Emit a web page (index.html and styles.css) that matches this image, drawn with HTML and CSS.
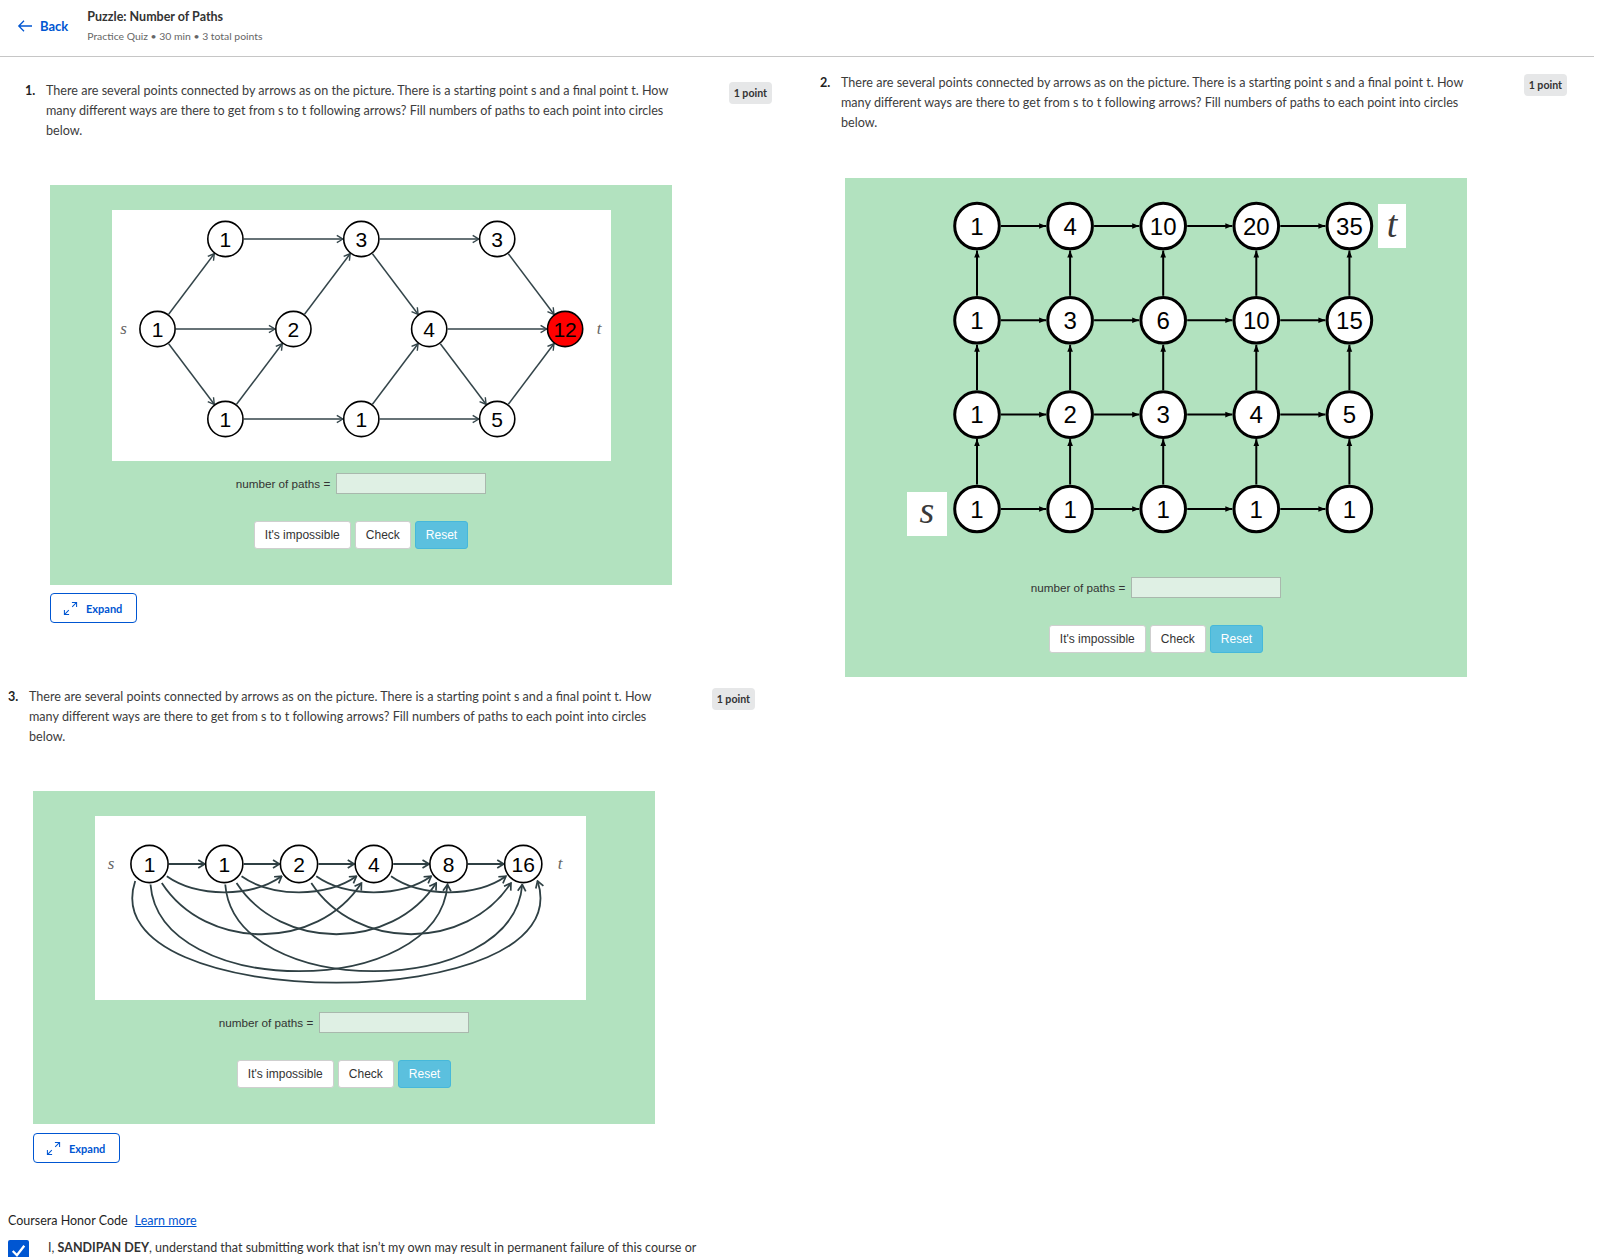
FILE: index.html
```html
<!DOCTYPE html>
<html lang="en">
<head>
<meta charset="utf-8">
<title>Puzzle: Number of Paths</title>
<link rel="stylesheet" href="styles.css">
</head>
<body>
<header class="topbar">
  <a class="back" href="#">
    <svg viewBox="0 0 16 16" aria-hidden="true"><path d="M15 8H1.8M7 2.8L1.8 8L7 13.2" fill="none" stroke="#0056d2" stroke-width="1.3"/></svg>
    <span>Back</span>
  </a>
  <div class="title-block">
    <div class="title">Puzzle: Number of Paths</div>
    <div class="meta">Practice Quiz • 30 min • 3 total points</div>
  </div>
</header>

<main class="quiz">
  <div class="row-top">
    <section class="q q1">
      <div class="q-head">
        <div class="qnum">1.</div>
        <div class="qtext">There are several points connected by arrows as on the picture. There is a starting point s and a final point t. How many different ways are there to get from s to t following arrows? Fill numbers of paths to each point into circles below.</div>
        <div class="badge">1 point</div>
      </div>
      <div class="widget">
        <div class="figure">
          <svg class="pic" width="499" height="251" viewBox="0 0 499 251">
            <defs>
              <marker id="oa1" viewBox="-8 -5 9 10" markerWidth="9" markerHeight="10" refX="0" refY="0" orient="auto" markerUnits="userSpaceOnUse">
                <path d="M-6,-3.6 Q-1.6,-1 0,0 Q-1.6,1 -6,3.6" fill="none" stroke="#34454a" stroke-width="1.4"/>
              </marker>
            </defs>
            <g class="e1">
              <path d="M56.65 104.23L102.25 43.77"/>
              <path d="M64 119H162.9"/>
              <path d="M56.65 133.77L102.25 194.23"/>
              <path d="M131.9 29H230.8"/>
              <path d="M124.55 194.23L170.25 133.77"/>
              <path d="M131.9 209H230.8"/>
              <path d="M192.55 104.23L238.15 43.77"/>
              <path d="M267.8 29H366.7"/>
              <path d="M260.45 43.77L306.05 104.23"/>
              <path d="M260.45 194.23L306.05 133.77"/>
              <path d="M267.8 209H366.7"/>
              <path d="M335.7 119H434.6"/>
              <path d="M328.35 133.77L374.05 194.23"/>
              <path d="M396.35 43.77L441.95 104.23"/>
              <path d="M396.35 194.23L441.95 133.77"/>
            </g>
            <g class="n1">
              <circle cx="45.5" cy="119" r="17.6"/>
              <circle cx="113.4" cy="29" r="17.6"/>
              <circle cx="113.4" cy="209" r="17.6"/>
              <circle cx="181.4" cy="119" r="17.6"/>
              <circle cx="249.3" cy="29" r="17.6"/>
              <circle cx="249.3" cy="209" r="17.6"/>
              <circle cx="317.2" cy="119" r="17.6"/>
              <circle cx="385.2" cy="29" r="17.6"/>
              <circle cx="385.2" cy="209" r="17.6"/>
              <circle class="hot" cx="453.1" cy="119" r="17.6"/>
            </g>
            <g class="v1">
              <text x="45.5" y="119" dy="7.5">1</text>
              <text x="113.4" y="29" dy="7.5">1</text>
              <text x="113.4" y="209" dy="7.5">1</text>
              <text x="181.4" y="119" dy="7.5">2</text>
              <text x="249.3" y="29" dy="7.5">3</text>
              <text x="249.3" y="209" dy="7.5">1</text>
              <text x="317.2" y="119" dy="7.5">4</text>
              <text x="385.2" y="29" dy="7.5">3</text>
              <text x="385.2" y="209" dy="7.5">5</text>
              <text x="453.1" y="119" dy="7.5">12</text>
            </g>
            <g class="lab">
              <text x="11.5" y="119" dy="5">s</text>
              <text x="487" y="119" dy="5">t</text>
            </g>
          </svg>
        </div>
        <div class="answer"><label>number of paths =</label><input class="ans" type="text"></div>
        <div class="buttons"><button class="btn">It's impossible</button><button class="btn">Check</button><button class="btn reset">Reset</button></div>
      </div>
      <button class="expand"><svg viewBox="0 0 16 16" aria-hidden="true"><path d="M9.5 1.5H14.5V6.5M14.5 1.5L9.8 6.2M1.5 9.5V14.5H6.5M1.5 14.5L6.2 9.8" fill="none" stroke="#0056d2" stroke-width="1.1"/></svg><span>Expand</span></button>
    </section>

    <section class="q q2">
      <div class="q-head">
        <div class="qnum">2.</div>
        <div class="qtext">There are several points connected by arrows as on the picture. There is a starting point s and a final point t. How many different ways are there to get from s to t following arrows? Fill numbers of paths to each point into circles below.</div>
        <div class="badge">1 point</div>
      </div>
      <div class="widget grid-widget">
        <svg class="gridpic" width="622" height="399" viewBox="0 0 622 399">
          <defs>
            <marker id="fa" viewBox="-8 -4 9 8" markerWidth="9" markerHeight="8" refX="0" refY="0" orient="auto" markerUnits="userSpaceOnUse">
              <path d="M0,0 L-7,-2.8 L-7,2.8 Z" fill="#000"/>
            </marker>
          </defs>
          <rect x="533" y="26" width="28" height="44" fill="#fff"/>
          <text class="big-lab" x="547" y="48" dy="11">t</text>
          <rect x="62" y="314" width="40" height="44" fill="#fff"/>
          <text class="big-lab" x="82" y="336" dy="9">s</text>
          <g class="e2">
            <path d="M156 48H201.1"/><path d="M249.1 48H294.2"/><path d="M342.2 48H387.3"/><path d="M435.3 48H480.4"/>
            <path d="M156 142.3H201.1"/><path d="M249.1 142.3H294.2"/><path d="M342.2 142.3H387.3"/><path d="M435.3 142.3H480.4"/>
            <path d="M156 236.6H201.1"/><path d="M249.1 236.6H294.2"/><path d="M342.2 236.6H387.3"/><path d="M435.3 236.6H480.4"/>
            <path d="M156 331H201.1"/><path d="M249.1 331H294.2"/><path d="M342.2 331H387.3"/><path d="M435.3 331H480.4"/>
            <path d="M132 117.8V72.5"/><path d="M132 212.1V166.8"/><path d="M132 306.5V261.1"/>
            <path d="M225.1 117.8V72.5"/><path d="M225.1 212.1V166.8"/><path d="M225.1 306.5V261.1"/>
            <path d="M318.2 117.8V72.5"/><path d="M318.2 212.1V166.8"/><path d="M318.2 306.5V261.1"/>
            <path d="M411.3 117.8V72.5"/><path d="M411.3 212.1V166.8"/><path d="M411.3 306.5V261.1"/>
            <path d="M504.4 117.8V72.5"/><path d="M504.4 212.1V166.8"/><path d="M504.4 306.5V261.1"/>
          </g>
          <g class="n2">
            <ellipse cx="132" cy="48" rx="22.3" ry="22.8"/><ellipse cx="225.1" cy="48" rx="22.3" ry="22.8"/><ellipse cx="318.2" cy="48" rx="22.3" ry="22.8"/><ellipse cx="411.3" cy="48" rx="22.3" ry="22.8"/><ellipse cx="504.4" cy="48" rx="22.3" ry="22.8"/>
            <ellipse cx="132" cy="142.3" rx="22.3" ry="22.8"/><ellipse cx="225.1" cy="142.3" rx="22.3" ry="22.8"/><ellipse cx="318.2" cy="142.3" rx="22.3" ry="22.8"/><ellipse cx="411.3" cy="142.3" rx="22.3" ry="22.8"/><ellipse cx="504.4" cy="142.3" rx="22.3" ry="22.8"/>
            <ellipse cx="132" cy="236.6" rx="22.3" ry="22.8"/><ellipse cx="225.1" cy="236.6" rx="22.3" ry="22.8"/><ellipse cx="318.2" cy="236.6" rx="22.3" ry="22.8"/><ellipse cx="411.3" cy="236.6" rx="22.3" ry="22.8"/><ellipse cx="504.4" cy="236.6" rx="22.3" ry="22.8"/>
            <ellipse cx="132" cy="331" rx="22.3" ry="22.8"/><ellipse cx="225.1" cy="331" rx="22.3" ry="22.8"/><ellipse cx="318.2" cy="331" rx="22.3" ry="22.8"/><ellipse cx="411.3" cy="331" rx="22.3" ry="22.8"/><ellipse cx="504.4" cy="331" rx="22.3" ry="22.8"/>
          </g>
          <g class="v2">
            <text x="132" y="48" dy="8.5">1</text><text x="225.1" y="48" dy="8.5">4</text><text x="318.2" y="48" dy="8.5">10</text><text x="411.3" y="48" dy="8.5">20</text><text x="504.4" y="48" dy="8.5">35</text>
            <text x="132" y="142.3" dy="8.5">1</text><text x="225.1" y="142.3" dy="8.5">3</text><text x="318.2" y="142.3" dy="8.5">6</text><text x="411.3" y="142.3" dy="8.5">10</text><text x="504.4" y="142.3" dy="8.5">15</text>
            <text x="132" y="236.6" dy="8.5">1</text><text x="225.1" y="236.6" dy="8.5">2</text><text x="318.2" y="236.6" dy="8.5">3</text><text x="411.3" y="236.6" dy="8.5">4</text><text x="504.4" y="236.6" dy="8.5">5</text>
            <text x="132" y="331" dy="8.5">1</text><text x="225.1" y="331" dy="8.5">1</text><text x="318.2" y="331" dy="8.5">1</text><text x="411.3" y="331" dy="8.5">1</text><text x="504.4" y="331" dy="8.5">1</text>
          </g>
        </svg>
        <div class="answer"><label>number of paths =</label><input class="ans" type="text"></div>
        <div class="buttons"><button class="btn">It's impossible</button><button class="btn">Check</button><button class="btn reset">Reset</button></div>
      </div>
    </section>
  </div>

  <section class="q q3">
    <div class="q-head">
      <div class="qnum">3.</div>
      <div class="qtext">There are several points connected by arrows as on the picture. There is a starting point s and a final point t. How many different ways are there to get from s to t following arrows? Fill numbers of paths to each point into circles below.</div>
      <div class="badge">1 point</div>
    </div>
    <div class="widget">
      <div class="figure">
        <svg class="pic" width="491" height="184" viewBox="0 0 491 184">
          <defs>
            <marker id="oa3" viewBox="-8 -5 9 10" markerWidth="9" markerHeight="10" refX="0" refY="0" orient="auto" markerUnits="userSpaceOnUse">
              <path d="M-6.5,-4 Q-1.8,-1.1 0,0 Q-1.8,1.1 -6.5,4" fill="none" stroke="#2f4044" stroke-width="1.7"/>
            </marker>
          </defs>
          <g class="e3">
            <path d="M74 48H109.75"/>
            <path d="M148.75 48H184.5"/>
            <path d="M223.5 48H259.25"/>
            <path d="M298.25 48H334"/>
            <path d="M373 48H408.75"/>
            <path d="M71.8 60.3C102.2 81.6 156.3 81.6 186.7 60.3"/>
            <path d="M146.55 60.3C176.95 81.6 231.05 81.6 261.45 60.3"/>
            <path d="M221.3 60.3C251.7 81.6 305.8 81.6 336.2 60.3"/>
            <path d="M296.05 60.3C326.45 81.6 380.55 81.6 410.95 60.3"/>
            <path d="M66.8 67C111.2 135.3 222.05 135.3 266.45 67"/>
            <path d="M141.55 67C185.95 135.3 296.8 135.3 341.2 67"/>
            <path d="M216.3 67C260.7 135.3 371.55 135.3 415.95 67"/>
            <path d="M55.5 68.5C64.5 184 343.5 184 352.5 68.5"/>
            <path d="M130.25 68.5C139.25 184 418.25 184 427.25 68.5"/>
            <path d="M40.2 65C-5 200.6 487.75 200.6 442.55 65"/>
          </g>
          <g class="n1">
            <circle cx="54.5" cy="48" r="18.6"/>
            <circle cx="129.25" cy="48" r="18.6"/>
            <circle cx="204" cy="48" r="18.6"/>
            <circle cx="278.75" cy="48" r="18.6"/>
            <circle cx="353.5" cy="48" r="18.6"/>
            <circle cx="428.25" cy="48" r="18.6"/>
          </g>
          <g class="v1">
            <text x="54.5" y="48" dy="7.5">1</text>
            <text x="129.25" y="48" dy="7.5">1</text>
            <text x="204" y="48" dy="7.5">2</text>
            <text x="278.75" y="48" dy="7.5">4</text>
            <text x="353.5" y="48" dy="7.5">8</text>
            <text x="428.25" y="48" dy="7.5">16</text>
          </g>
          <g class="lab">
            <text x="16" y="48" dy="5">s</text>
            <text x="465" y="48" dy="5">t</text>
          </g>
        </svg>
      </div>
      <div class="answer"><label>number of paths =</label><input class="ans" type="text"></div>
      <div class="buttons"><button class="btn">It's impossible</button><button class="btn">Check</button><button class="btn reset">Reset</button></div>
    </div>
    <button class="expand expand3"><svg viewBox="0 0 16 16" aria-hidden="true"><path d="M9.5 1.5H14.5V6.5M14.5 1.5L9.8 6.2M1.5 9.5V14.5H6.5M1.5 14.5L6.2 9.8" fill="none" stroke="#0056d2" stroke-width="1.1"/></svg><span>Expand</span></button>
  </section>

  <section class="honor">
    <div class="honor-title">Coursera Honor Code <a href="#" class="learn">Learn more</a></div>
    <div class="agree">
      <span class="check"><svg viewBox="0 0 20 20" aria-hidden="true"><path d="M4.5 10.5L8.5 14.5L15.5 5.5" fill="none" stroke="#fff" stroke-width="2.2"/></svg></span>
      <p>I, <b>SANDIPAN DEY</b>, understand that submitting work that isn’t my own may result in permanent failure of this course or deactivation of my Coursera account.</p>
    </div>
  </section>
</main>
</body>
</html>
```

FILE: styles.css
```css
* { box-sizing: border-box; }
body {
  margin: 0;
  font-family: Lato, "Liberation Sans", Arial, sans-serif;
  color: #1f1f1f;
  background: #fff;
}

/* header */
.topbar {
  height: 57px;
  margin-right: 20px;
  border-bottom: 1px solid #c6c6c6;
  display: flex;
  align-items: flex-start;
}
.back {
  display: flex;
  align-items: center;
  gap: 7px;
  margin: 18px 0 0 17px;
  color: #0056d2;
  font-weight: 700;
  font-size: 13px;
  line-height: 16px;
  text-decoration: none;
}
.back svg { width: 16px; height: 16px; display: block; }
.title-block { margin: 8px 0 0 19px; }
.title { font-size: 12.5px; font-weight: 700; line-height: 18px; color: #333; }
.meta { margin-top: 2px; font-size: 10.4px; line-height: 16px; color: #666; }

/* questions */
.row-top { display: flex; align-items: flex-start; }
.q { width: 747px; }
.q1 { margin: 24px 0 0 25px; }
.q2 { margin: 16px 0 0 48px; }
.q3 { margin: 10px 0 0 8px; }
.q-head { display: flex; align-items: flex-start; }
.qnum { width: 21px; flex: none; font-size: 12.6px; font-weight: 700; line-height: 20px; color: #1f1f1f; }
.qtext { width: 632px; flex: none; font-size: 12.6px; line-height: 20px; color: #3c3c3c; }
.badge {
  margin-left: auto;
  margin-top: 1px;
  height: 22px;
  padding: 0 5px;
  border-radius: 4px;
  background: #e6e7e8;
  font-size: 10.6px;
  font-weight: 700;
  line-height: 22px;
  color: #333;
}

/* widget */
.widget {
  width: 622px;
  margin: 44px 0 0 25px;
  padding: 25px 0 36px;
  background: #b2e2bf;
}
.q2 .widget { margin-top: 45px; padding: 0 0 24px; }
.figure { padding-left: 62px; }
.pic { display: block; background: #fff; }
.gridpic { display: block; }
.answer {
  margin-top: 12px;
  height: 21px;
  display: flex;
  justify-content: center;
  align-items: center;
  gap: 6px;
  font-family: "Liberation Sans", Arial, sans-serif;
  font-size: 11.7px;
  color: #333;
}
.grid-widget .answer { margin-top: 0; }
.ans {
  width: 150px;
  height: 21px;
  border: 1px solid #a9b8ad;
  background: #dff0e4;
  padding: 0;
}
.buttons {
  margin-top: 27px;
  display: flex;
  justify-content: center;
  gap: 4px;
}
.btn {
  height: 28px;
  padding: 0 10px;
  border: 1px solid #cfcfcf;
  border-radius: 3px;
  background: #fff;
  color: #333;
  font-family: "Liberation Sans", Arial, sans-serif;
  font-size: 12px;
  line-height: 26px;
}
.btn.reset { background: #5bc0de; border-color: #46b8da; color: #fff; }

/* svg diagrams */
.e1 path { fill: none; stroke: #34454a; stroke-width: 1.5; marker-end: url(#oa1); }
.e3 path { fill: none; stroke: #2f4044; stroke-width: 1.8; marker-end: url(#oa3); }
.e2 path { fill: none; stroke: #000; stroke-width: 2; marker-end: url(#fa); }
.n1 circle { fill: #fff; stroke: #000; stroke-width: 1.6; }
.n1 .hot { fill: #ff0000; }
.n2 ellipse { fill: #fff; stroke: #000; stroke-width: 3; }
.v1 text { font-family: "Liberation Sans", Arial, sans-serif; font-size: 21px; text-anchor: middle; fill: #000; }
.v2 text { font-family: "Liberation Sans", Arial, sans-serif; font-size: 24px; text-anchor: middle; fill: #000; }
.lab text { font-family: "Liberation Serif", "DejaVu Serif", serif; font-style: italic; font-size: 17px; text-anchor: middle; fill: #666; }
.big-lab { font-family: "Liberation Serif", "DejaVu Serif", serif; font-style: italic; font-size: 38px; text-anchor: middle; fill: #3a3a3a; }

/* expand */
.expand {
  margin: 8px 0 0 25px;
  width: 87px;
  height: 30px;
  padding: 0 0 0 12px;
  display: flex;
  align-items: center;
  gap: 8px;
  border: 1px solid #0056d2;
  border-radius: 4px;
  background: #fff;
  color: #0056d2;
  font-family: Lato, "Liberation Sans", Arial, sans-serif;
  font-size: 11px;
  font-weight: 700;
}
.expand svg { width: 15px; height: 15px; display: block; }
.expand3 { margin-top: 9px; }

/* honor code */
.honor { margin: 49px 0 0 8px; }
.honor-title { font-size: 12.5px; line-height: 18px; color: #1f1f1f; }
.learn { margin-left: 4px; color: #0056d2; text-decoration: underline; }
.agree { margin-top: 8px; display: flex; align-items: flex-start; gap: 19px; }
.check {
  flex: none;
  width: 21px;
  height: 21px;
  margin-top: 2px;
  border-radius: 2px;
  background: #0056d2;
}
.check svg { width: 21px; height: 21px; display: block; }
.agree p { margin: 0; font-size: 12.5px; line-height: 20px; color: #333; width: 700px; }
```
